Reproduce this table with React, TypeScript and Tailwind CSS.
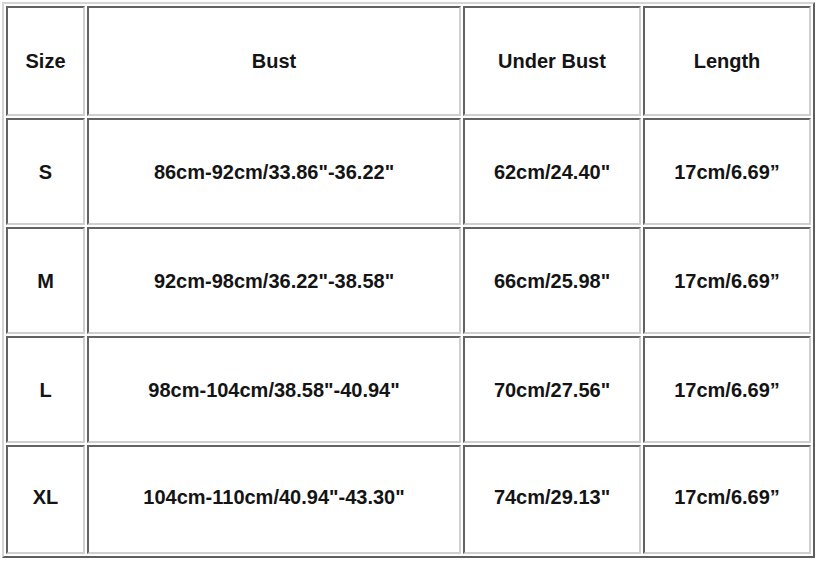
const headers = ["Size", "Bust", "Under Bust", "Length"];

const rows = [
  ["S", "86cm-92cm/33.86\"-36.22\"", "62cm/24.40\"", "17cm/6.69\u201d"],
  ["M", "92cm-98cm/36.22\"-38.58\"", "66cm/25.98\"", "17cm/6.69\u201d"],
  ["L", "98cm-104cm/38.58\"-40.94\"", "70cm/27.56\"", "17cm/6.69\u201d"],
  ["XL", "104cm-110cm/40.94\"-43.30\"", "74cm/29.13\"", "17cm/6.69\u201d"],
];

function Cell(props: { children: React.ReactNode; last?: boolean }) {
  return (
    <div
      className={`flex items-center justify-center border-2 border-t-[#626262] border-l-[#626262] border-b-[#cfcfcf] border-r-[#cfcfcf] bg-white ${
        props.last ? "pb-[6px]" : ""
      }`}
    >
      {props.children}
    </div>
  );
}

export default function App() {
  return (
    <div className="h-[564px] w-[819px] bg-white pl-[2px] pt-[2px]" style={{ fontFamily: '"Liberation Sans", Arial, sans-serif' }}>
      <div className="grid w-fit grid-cols-[79px_374px_178px_168px] grid-rows-[110px_107px_107px_107px_109px] gap-[2px] border-2 border-t-[#d4d4d4] border-l-[#d4d4d4] border-b-[#5e5e5e] border-r-[#5e5e5e] p-[2px] text-[20px] font-bold text-[#141414]">
        {headers.map((h) => (
          <Cell key={h}>{h}</Cell>
        ))}
        {rows.map((r, ri) =>
          r.map((v, i) => (
            <Cell key={r[0] + i} last={ri === rows.length - 1}>
              {v}
            </Cell>
          ))
        )}
      </div>
    </div>
  );
}
